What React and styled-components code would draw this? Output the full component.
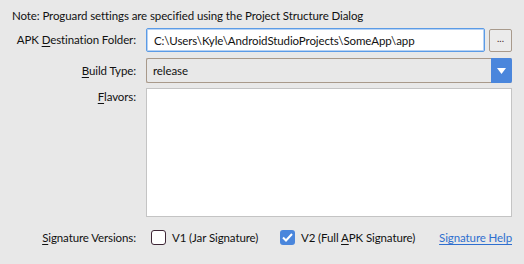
import React from "react";
import styled, { createGlobalStyle } from "styled-components";

const Global = createGlobalStyle`
  html, body { margin: 0; padding: 0; background: #e8e8e8; }
  body {
    font-family: "Lato", "Noto Sans", sans-serif;
    font-size: 11.5px;
    letter-spacing: -0.1px;
    color: #111;
  }
`;

const Page = styled.div`
  width: 524px;
  height: 264px;
  box-sizing: border-box;
  padding: 8px 12px 0 12px;
  display: flex;
  flex-direction: column;
  background: #e8e8e8;
`;

const Note = styled.div`
  height: 16px;
  line-height: 16px;
  white-space: nowrap;
`;

const FormRow = styled.div`
  display: grid;
  grid-template-columns: 124px 1fr;
  column-gap: 10px;
  align-items: ${(p) => p.$align || "center"};
  margin-top: ${(p) => p.$mt}px;
  height: ${(p) => p.$h}px;
`;

const Label = styled.label`
  justify-self: end;
  white-space: nowrap;
  line-height: 16px;
  padding-top: ${(p) => p.$pt || 0}px;
`;

const Mn = styled.span`
  text-decoration: underline;
  text-underline-offset: 2px;
`;

const FieldGroup = styled.div`
  display: flex;
  align-items: center;
  gap: 4px;
  height: 100%;
`;

const TextInput = styled.div`
  flex: 1;
  height: 24px;
  box-sizing: border-box;
  background: #fff;
  border: 1px solid #5b9be6;
  box-shadow: inset 0 0 0 1px #b7d2f3;
  border-radius: 2px;
  padding: 0 7px;
  display: flex;
  align-items: center;
  white-space: nowrap;
`;

const BrowseButton = styled.button`
  width: 23px;
  height: 23px;
  box-sizing: border-box;
  border: 1px solid #a89a8c;
  border-radius: 2px;
  background: #ebebeb;
  font-family: inherit;
  font-size: 10px;
  color: #4a2a2a;
  padding: 0 0 4px;
  display: flex;
  align-items: center;
  justify-content: center;
`;

const Combo = styled.div`
  height: 100%;
  box-sizing: border-box;
  display: flex;
  border: 1px solid #a8998a;
  border-right: none;
  border-radius: 2px;
  background: #e8e8e8;
`;

const ComboText = styled.div`
  flex: 1;
  padding: 0 6px;
  display: flex;
  align-items: center;
`;

const ComboArrow = styled.div`
  width: 21px;
  margin: -1px 0;
  background: #4a86dc;
  border-radius: 0 2px 2px 0;
  display: flex;
  align-items: center;
  justify-content: center;
`;

const FlavorsList = styled.div`
  height: 100%;
  box-sizing: border-box;
  background: #fff;
  border: 1px solid #c4c4c4;
`;

const Options = styled.div`
  display: flex;
  align-items: center;
  padding-left: 5px;
`;

const Check = styled.label`
  display: flex;
  align-items: center;
  gap: 6px;
  width: ${(p) => (p.$w ? `${p.$w}px` : "auto")};
  white-space: nowrap;
`;

const Box = styled.span`
  width: 15px;
  height: 15px;
  flex: none;
  box-sizing: border-box;
  border-radius: 3px;
  border: ${(p) => (p.$checked ? "none" : "1px solid #3e2636")};
  background: ${(p) => (p.$checked ? "#4a86dc" : "#fff")};
  display: flex;
  align-items: center;
  justify-content: center;
`;

const Link = styled.a`
  color: #2f6fcf;
  text-decoration: underline;
  text-underline-offset: 2px;
  white-space: nowrap;
  margin-left: auto;
`;

export default function App() {
  return (
    <>
      <Global />
      <Page>
        <Note>Note: Proguard settings are specified using the Project Structure Dialog</Note>

        <FormRow $mt={4} $h={24}>
          <Label>
            APK <Mn>D</Mn>estination Folder:
          </Label>
          <FieldGroup>
            <TextInput>C:\Users\Kyle\AndroidStudioProjects\SomeApp\app</TextInput>
            <BrowseButton>...</BrowseButton>
          </FieldGroup>
        </FormRow>

        <FormRow $mt={6} $h={25}>
          <Label>
            <Mn>B</Mn>uild Type:
          </Label>
          <Combo>
            <ComboText>release</ComboText>
            <ComboArrow>
              <svg width="9" height="6" viewBox="0 0 9 6">
                <path d="M0 0 H9 L4.5 6 Z" fill="#fff" />
              </svg>
            </ComboArrow>
          </Combo>
        </FormRow>

        <FormRow $mt={5} $h={129} $align="stretch">
          <Label $pt={1}>
            <Mn>F</Mn>lavors:
          </Label>
          <FlavorsList />
        </FormRow>

        <FormRow $mt={12} $h={17}>
          <Label>
            <Mn>S</Mn>ignature Versions:
          </Label>
          <Options>
            <Check $w={129}>
              <Box />
              <span>V1 (Jar Signature)</span>
            </Check>
            <Check>
              <Box $checked>
                <svg width="11" height="9" viewBox="0 0 11 9">
                  <path d="M1 4.5 L4 7.5 L10 1" stroke="#fff" strokeWidth="2" fill="none" />
                </svg>
              </Box>
              <span>
                V2 (Full <Mn>A</Mn>PK Signature)
              </span>
            </Check>
            <Link href="#">Signature Help</Link>
          </Options>
        </FormRow>
      </Page>
    </>
  );
}
